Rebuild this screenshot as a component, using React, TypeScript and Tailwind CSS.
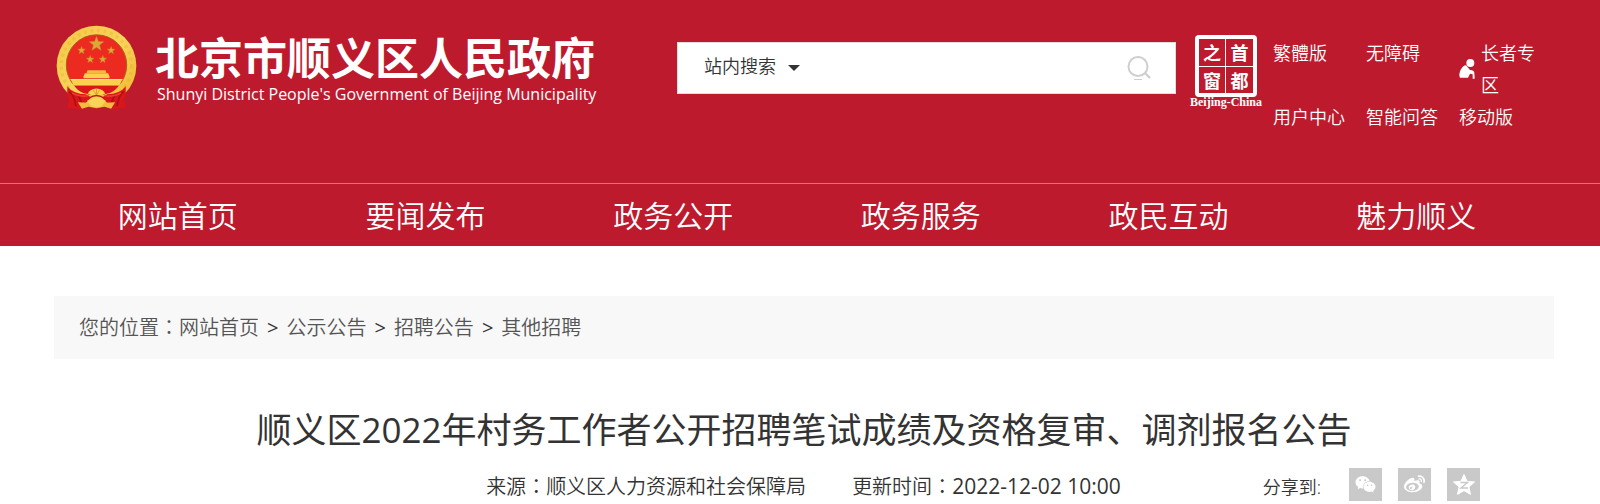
import { FaWeibo, FaWeixin } from 'react-icons/fa'

const navItems = ['网站首页', '要闻发布', '政务公开', '政务服务', '政民互动', '魅力顺义']

const crumbs = ['网站首页', '公示公告', '招聘公告', '其他招聘']

function Star({ x, y, r }: { x: number; y: number; r: number }) {
  const points = Array.from({ length: 10 }, (_, i) => {
    const radius = i % 2 ? r * 0.42 : r
    const angle = (Math.PI / 5) * i - Math.PI / 2
    return `${x + radius * Math.cos(angle)},${y + radius * Math.sin(angle)}`
  }).join(' ')
  return <polygon points={points} fill="#dda83a" stroke="#c98a22" strokeWidth="1.5" />
}

function Emblem() {
  return (
    <svg viewBox="48 44 244 258" className="h-[86px] w-[81px] shrink-0" aria-hidden="true">
      <defs>
        <linearGradient id="gold" x1="0" y1="0" x2="1" y2="1">
          <stop offset="0" stopColor="#f3c846" />
          <stop offset="0.5" stopColor="#f8d45a" />
          <stop offset="1" stopColor="#eeb52f" />
        </linearGradient>
      </defs>
      <circle cx="170" cy="166" r="120" fill="url(#gold)" />
      <circle cx="170" cy="166" r="106" fill="none" stroke="#e3a52c" strokeWidth="10" strokeDasharray="9 11" opacity="0.3" />
      <circle cx="170" cy="164" r="91" fill="#ec2a20" stroke="#a8611c" strokeWidth="3" />
      <Star x={170} y={101} r={23} />
      <Star x={125} y={120} r={12} />
      <Star x={214} y={120} r={12} />
      <Star x={151} y={147} r={12} />
      <Star x={189} y={147} r={12} />
      {/* gate tower */}
      <path d="M143 180h54l3 8h-60z" fill="#f4b93c" />
      <path d="M135 189h70l4 9v6h-78v-6z" fill="#fbd150" />
      <path d="M92 206h156l-9 20H101z" fill="#fbd04c" />
      <path d="M92 206h156v4H92z" fill="#fde27a" />
      <path d="M104 227h132q-10 16-28 22h-76q-18-6-28-22z" fill="#d9161a" />
      {/* ribbons */}
      <path d="M82 228q18 24 56 24l16 10-18 18-10 18-46-6 8-22-6-12z" fill="#d9161a" />
      <path d="M258 228q-18 24-56 24l-16 10 18 18 10 18 46-6-8-22 6-12z" fill="#d9161a" />
      <path d="M88 244q16 12 20 44M252 244q-16 12-20 44M116 256l10 24M224 256l-10 24" fill="none" stroke="#a90f16" strokeWidth="5" />
      <path d="M96 248q30 14 50 8M244 248q-30 14-50 8" fill="none" stroke="#f03c2c" strokeWidth="5" />
      <path d="M144 250q6-14 26-15 20 1 26 15l-12 6h-28z" fill="#fbd150" />
      <path d="M170 256l-10-18M170 256v-20M170 256l10-18" stroke="#d4881e" strokeWidth="2" />
      <path d="M114 276l32 2 24-14 24 14 32-2-12 20-20-6-24 4-24-4-20 6z" fill="#f0bd3c" />
      <path d="M142 272q28-22 56 0l-14 18h-28z" fill="#f8d458" />
      <path d="M150 262q20-12 40 0" fill="none" stroke="#b5121a" strokeWidth="4" />
    </svg>
  )
}

function SearchIcon() {
  return (
    <svg viewBox="0 0 24 24" className="size-6" fill="none" stroke="#cfcfcf" aria-hidden="true">
      <circle cx="11" cy="10.5" r="9.5" strokeWidth="2" />
      <path d="M18 17l5 5" strokeWidth="2.4" />
      <path d="M7 23.5h8" strokeWidth="1" />
    </svg>
  )
}

function ElderIcon() {
  return (
    <svg viewBox="0 0 46 60" className="h-5 w-4 shrink-0" fill="#fff" aria-hidden="true">
      <circle cx="33" cy="12" r="12" />
      <path d="M14 20q6-3 10 3l8 10q12 0 13 8l1 18h-6V46l-8-2-6 12H2q-5-10 2-24 4-8 10-12z" />
    </svg>
  )
}

function QzoneIcon() {
  return (
    <svg viewBox="0 0 22 21" className="h-[21px] w-[22px]" aria-hidden="true">
      <path
        d="M11 .5l3 6.8 7.5.7-5.6 5 1.6 7.4L11 16.6l-6.5 3.8L6.1 13 .5 8 8 7.3z"
        fill="#fff"
        stroke="#fff"
        strokeLinejoin="round"
      />
      <path d="M7.500 8.500h7l-6.500 5.500h7" fill="none" stroke="#c9c9c9" strokeWidth="1.400" />
    </svg>
  )
}

// full-width colon set in the middle of its cell
function Colon() {
  return <span className="font-['Noto_Sans_CJK_TC',sans-serif]">：</span>
}

function Seal() {
  return (
    <a href="#" className="flex w-[70px] shrink-0 flex-col items-center text-white">
      <span className="grid size-[62px] grid-cols-2 rounded-[4px] border-4 border-white text-center font-['Noto_Sans_CJK_SC',sans-serif] text-[18px] leading-[26px] font-bold">
        <span className="border-r border-b border-white">之</span>
        <span className="border-b border-white">首</span>
        <span className="border-r border-white">窗</span>
        <span>都</span>
      </span>
      <span className="font-['Liberation_Serif',serif] text-[12px] leading-[11px] font-bold whitespace-nowrap">
        Beijing-China
      </span>
    </a>
  )
}

function Header() {
  return (
    <header className="bg-[#bd1a2d] text-white">
      <div className="flex h-[183px] items-start pr-[46px] pl-[56px]">
        <a href="#" className="flex w-[621px] shrink-0 pt-[25px]">
          <Emblem />
          <span className="ml-[18px] pt-[4px] whitespace-nowrap">
            <span className="block text-[44px] leading-[58px] font-bold">北京市顺义区人民政府</span>
            <span className="block pl-[2px] font-['Open_Sans',sans-serif] text-[16px] leading-[14px]">
              Shunyi District People's Government of Beijing Municipality
            </span>
          </span>
        </a>

        <form className="mt-[42px] flex h-[52px] min-w-0 flex-1 items-center border border-[#ddd] bg-white pr-6 pl-[26px]">
          <div className="relative flex items-center">
            <select
              aria-label="搜索范围"
              className="w-[98px] appearance-none bg-transparent pb-1 text-[18px] leading-[26px] font-[350] text-[#333] outline-none"
            >
              <option>站内搜索</option>
            </select>
            <svg viewBox="0 0 12 6" className="pointer-events-none absolute right-[2px] h-[6px] w-[12px]" aria-hidden="true">
              <path d="M0 0h12L6 6z" fill="#333" />
            </svg>
          </div>
          <input type="text" aria-label="搜索" className="min-w-0 flex-1 bg-transparent px-2 text-[18px] text-[#333] outline-none" />
          <button type="button" aria-label="提交搜索">
            <SearchIcon />
          </button>
        </form>

        <div className="ml-[15px] flex w-[363px] shrink-0 pt-[35px]">
          <Seal />
          <div className="ml-3 grid flex-1 grid-cols-[93px_93px_1fr] items-start pt-[2px] text-[18px] leading-[32px] font-[350]">
            <a href="#">繁體版</a>
            <a href="#">无障碍</a>
            <a href="#" className="flex items-center gap-[6px]">
              <ElderIcon />
              <span className="w-[60px]">长者专区</span>
            </a>
            <a href="#">用户中心</a>
            <a href="#">智能问答</a>
            <a href="#">移动版</a>
          </div>
        </div>
      </div>

      <nav className="border-t border-[#e0707c] pr-[60px] pl-[54px]">
        <ul className="grid grid-cols-6 pt-[2px] text-center text-[30px] leading-[60px] font-[350]">
          {navItems.map((item) => (
            <li key={item}>
              <a href="#">{item}</a>
            </li>
          ))}
        </ul>
      </nav>
    </header>
  )
}

function Breadcrumb() {
  return (
    <nav aria-label="您的位置" className="bg-[#f8f8f8] px-[25px] text-[20px] leading-[62px] font-[350] text-[#555]">
      <span>
        您的位置
        <Colon />
      </span>
      {crumbs.map((crumb, i) => (
        <span key={crumb}>
          {i > 0 && <span className="mx-2 font-normal text-[#333]">&gt;</span>}
          <a href="#">{crumb}</a>
        </span>
      ))}
    </nav>
  )
}

export default function App() {
  return (
    <div className="bg-white font-['Open_Sans','Noto_Sans_CJK_SC',sans-serif] text-[#333]">
      <Header />
      <main className="pt-[50px] pr-[46px] pl-[54px]">
        <Breadcrumb />
        <h1 className="pt-[45px] text-center text-[35px] leading-[52px]">
          顺义区2022年村务工作者公开招聘笔试成绩及资格复审、调剂报名公告
        </h1>
        <div className="flex items-end justify-end pt-3 pr-[74px] text-[20px] leading-[28px] font-[350]">
          <span>
            来源
            <Colon />
            顺义区人力资源和社会保障局
          </span>
          <span className="ml-[46px]">
            更新时间
            <Colon />
            <time className="text-[21px] font-normal">2022-12-02 10:00</time>
          </span>
          <div className="ml-[142px] flex items-end gap-4">
            <span className="mr-3 text-[18px]">分享到:</span>
            <a href="#" aria-label="微信" className="flex size-[33px] items-center justify-center bg-[#c9c9c9] text-white">
              <FaWeixin size={21} />
            </a>
            <a href="#" aria-label="微博" className="flex size-[33px] items-center justify-center bg-[#c9c9c9] text-white">
              <FaWeibo size={21} />
            </a>
            <a href="#" aria-label="QQ空间" className="flex size-[33px] items-center justify-center bg-[#c9c9c9] text-white">
              <QzoneIcon />
            </a>
          </div>
        </div>
      </main>
    </div>
  )
}
